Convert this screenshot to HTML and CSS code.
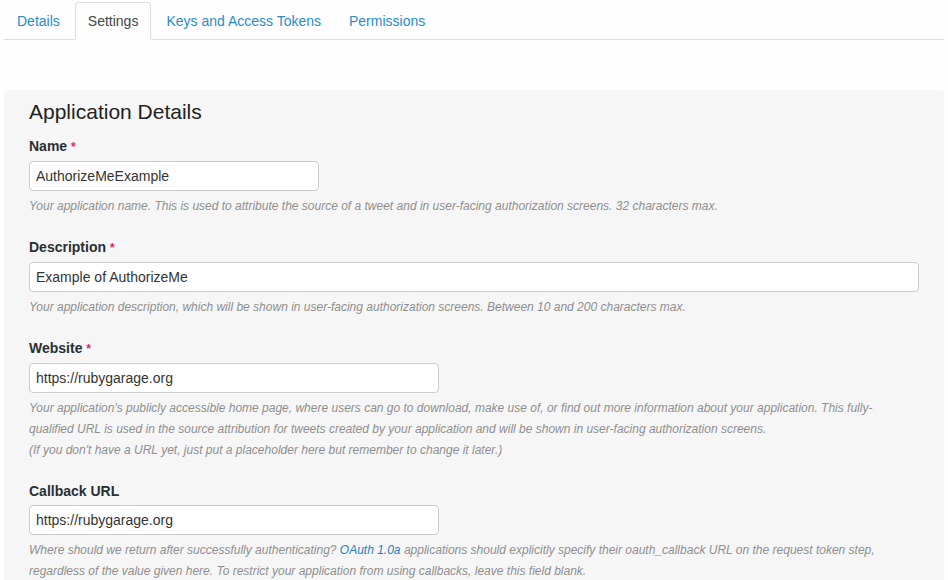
FILE: index.html
```html
<!DOCTYPE html>
<html>
<head>
<meta charset="utf-8">
<link rel="stylesheet" href="styles.css">
</head>
<body>
<div class="page">
  <ul class="tabs">
    <li class="tab"><a href="#">Details</a></li>
    <li class="tab active"><a href="#">Settings</a></li>
    <li class="tab"><a href="#">Keys and Access Tokens</a></li>
    <li class="tab"><a href="#">Permissions</a></li>
  </ul>

  <form class="panel">
    <h2 class="panel-title">Application Details</h2>

    <div class="field">
      <label class="label">Name <span class="req">*</span></label>
      <input class="input input-sm" type="text" value="AuthorizeMeExample">
      <p class="help">Your application name. This is used to attribute the source of a tweet and in user-facing authorization screens. 32 characters max.</p>
    </div>

    <div class="field">
      <label class="label">Description <span class="req">*</span></label>
      <input class="input input-full" type="text" value="Example of AuthorizeMe">
      <p class="help">Your application description, which will be shown in user-facing authorization screens. Between 10 and 200 characters max.</p>
    </div>

    <div class="field">
      <label class="label">Website <span class="req">*</span></label>
      <input class="input input-md" type="text" value="https://rubygarage.org">
      <p class="help">Your application's publicly accessible home page, where users can go to download, make use of, or find out more information about your application. This fully-<br>qualified URL is used in the source attribution for tweets created by your application and will be shown in user-facing authorization screens.<br>(If you don't have a URL yet, just put a placeholder here but remember to change it later.)</p>
    </div>

    <div class="field">
      <label class="label">Callback URL</label>
      <input class="input input-md" type="text" value="https://rubygarage.org">
      <p class="help">Where should we return after successfully authenticating? <a class="help-link" href="#">OAuth 1.0a</a> applications should explicitly specify their oauth_callback URL on the request token step,<br>regardless of the value given here. To restrict your application from using callbacks, leave this field blank.</p>
    </div>
  </form>
</div>
</body>
</html>
```

FILE: styles.css
```css
* { box-sizing: border-box; }

html, body {
  margin: 0;
  padding: 0;
  background: #fefefe;
}

body {
  font-family: "Liberation Sans", Arial, Helvetica, sans-serif;
  font-size: 14px;
  line-height: 20px;
  color: #333;
  overflow: hidden;
}

.page {
  padding: 2px 4px 0 4px;
}

.tabs {
  list-style: none;
  margin: 0;
  padding: 0;
  display: flex;
  border-bottom: 1px solid #dddddd;
}

.tab {
  margin-right: 2px;
  margin-bottom: -1px;
}

.tab a {
  display: block;
  padding: 8px 12px 8px;
  line-height: 20px;
  font-size: 14px;
  color: #2a8bc9;
  text-decoration: none;
  border: 1px solid transparent;
  border-radius: 4px 4px 0 0;
}

.tab.active a {
  color: #444;
  background: #fefefe;
  border-color: #dddddd;
  border-bottom-color: #fefefe;
}

.panel {
  margin-top: 50px;
  background: #f6f6f6;
  border-radius: 4px;
  padding: 9px 25px 20px 25px;
}

.panel-title {
  margin: 0 0 11px 0;
  font-size: 21px;
  line-height: 26px;
  font-weight: normal;
  color: #222;
}

.field {
  display: flex;
  flex-direction: column;
  align-items: flex-start;
  margin-bottom: 20px;
}

.label {
  font-weight: bold;
  font-size: 14px;
  line-height: 20px;
  color: #292f33;
  margin-bottom: 4px;
}

.req {
  color: #e0245e;
  font-size: 12px;
}

.input {
  height: 30px;
  padding: 4px 6px;
  font-family: "Liberation Sans", Arial, Helvetica, sans-serif;
  font-size: 14px;
  color: #333;
  background: #fff;
  border: 1px solid #cccccc;
  border-radius: 4px;
  outline: none;
}

.input-sm { width: 290px; }
.input-md { width: 410px; }
.input-full { width: 890px; }

.help {
  margin: 5px 0 0 0;
  font-size: 12px;
  line-height: 21px;
  font-style: italic;
  color: #8f8f8f;
}

.help-link {
  color: #2b7bb9;
  text-decoration: none;
}
```
